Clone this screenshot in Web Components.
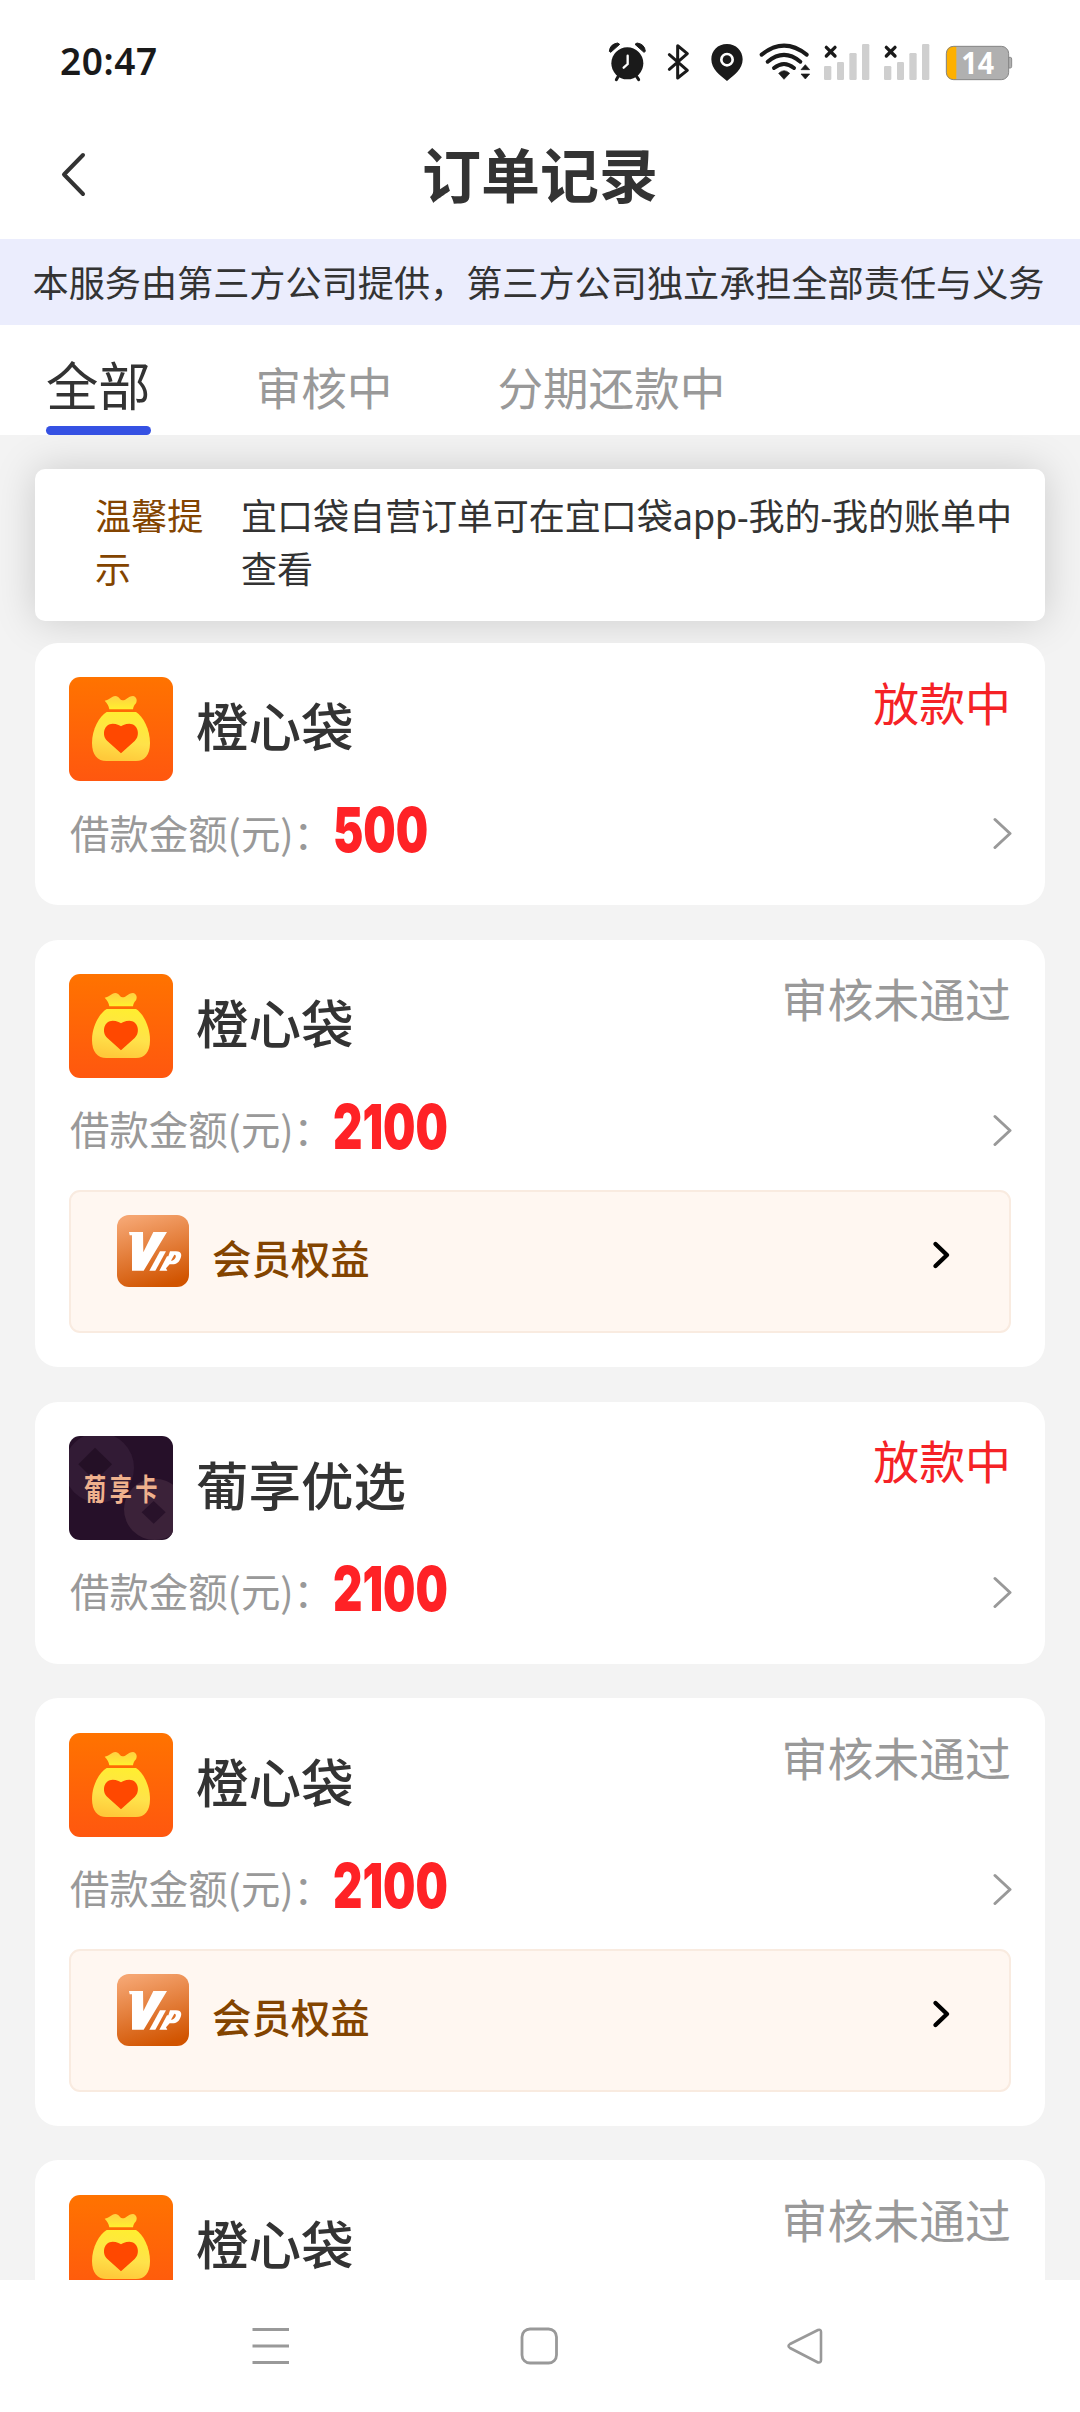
<!DOCTYPE html>
<html lang="zh-CN">
<head>
<meta charset="utf-8">
<title>订单记录</title>
<style>
html,body{margin:0;padding:0}
body{background:#f3f3f3;font-family:"Noto Sans CJK SC",sans-serif;color:#333}
</style>
</head>
<body>
<order-page></order-page>
<script>
const define = (name, html) => customElements.define(name, class extends HTMLElement {
  connectedCallback() {
    if (this.shadowRoot) return;
    const t = document.createElement('template');
    t.innerHTML = typeof html === 'function' ? html(this) : html;
    this.attachShadow({ mode: 'open' }).appendChild(t.content.cloneNode(true));
  }
});

define('status-bar', `
<style>
:host{display:flex;justify-content:space-between;height:110px;background:#fff;box-sizing:border-box;padding:0 40px 0 60px}
.time{font:600 37px/50px "Noto Sans",sans-serif;letter-spacing:.6px;color:#1a1a1a;margin-top:36px}
svg{display:block;margin-top:20px}
</style>
<div class="time">20:47</div>
<svg width="460" height="90" viewBox="0 0 1380 270" fill="#1a1a1a">
  <circle cx="142" cy="130" r="48"/>
  <path d="M88 94 Q90 72 113 69 L119 73 L92 97Z M196 94 Q194 72 171 69 L165 73 L192 97Z" stroke="#1a1a1a" stroke-width="3" stroke-linejoin="round"/>
  <path d="M117 165 L109 179 M167 165 L176 179" stroke="#1a1a1a" stroke-width="9" stroke-linecap="round"/>
  <path d="M143 107 V132 L131 143" stroke="#fff" stroke-width="7" fill="none" stroke-linecap="round"/>
  <path d="M268 104 L322 151 L293 174 V77 L322 101 L268 148" fill="none" stroke="#1a1a1a" stroke-width="9" stroke-linecap="round" stroke-linejoin="round"/>
  <path fill-rule="evenodd" d="M441 72 C413 72 394 92 394 118 C394 148 420 166 441 183 C462 166 488 148 488 118 C488 92 468 72 441 72Z M441 98a21 21 0 1 1 0 42a21 21 0 1 1 0-42Z"/>
  <circle cx="441" cy="119" r="13"/>
  <g fill="none" stroke="#1a1a1a" stroke-width="12" stroke-linecap="round">
    <path d="M545 104 Q612 50 680 104"/><path d="M563 125 Q612 84 661 125"/><path d="M582 144 Q612 120 642 144"/>
  </g>
  <path d="M596 160 Q612 144 629 160 L612 178Z M663 149 L676 134 L689 149Z M663 162 L676 177 L689 162Z" stroke="#1a1a1a" stroke-width="2" stroke-linejoin="round"/>
  <g id="s"><g fill="#cfcfcf"><rect x="732" y="138" width="22" height="42" rx="4"/><rect x="771" y="126" width="21" height="54" rx="4"/><rect x="808" y="99" width="22" height="81" rx="4"/><rect x="846" y="72" width="22" height="108" rx="4"/></g>
  <path d="M739 82 L765 108 M765 82 L739 108" stroke="#1a1a1a" stroke-width="10" stroke-linecap="round"/></g>
  <use href="#s" x="180"/>
  <path d="M1285 112 h6 q4 0 4 5 v22 q0 5 -4 5 h-6z" fill="#b0b0b0" stroke="#8a8a8a" stroke-width="3"/>
  <rect x="1099" y="79" width="187" height="100" rx="22" fill="#b0b0b0"/>
  <path d="M1129 79 h-8 q-22 0 -22 22 v56 q0 22 22 22 h8z" fill="#fdb000"/>
  <rect x="1099" y="79" width="187" height="100" rx="22" fill="none" stroke="#858585" stroke-width="3"/>
  <text x="1144" y="163" font-family="Noto Sans" font-weight="700" font-size="92" textLength="98" lengthAdjust="spacingAndGlyphs" fill="#fff">14</text>
</svg>`);

define('page-header', `
<style>
:host{display:grid;grid-template-columns:120px 1fr 120px;align-items:center;height:129px;background:#fff}
svg{margin-left:58px;display:block}
h1{margin:-4px 0 0;text-align:center;font-size:59px;line-height:80px;font-weight:700;color:#333}
</style>
<svg width="32" height="48" viewBox="0 0 32 48" fill="none" stroke="#333" stroke-width="4" stroke-linecap="round" stroke-linejoin="round"><path d="M25 4 L6 23.500 L25 43"/></svg>
<h1><slot></slot></h1>`);

define('service-notice', `
<style>:host{display:flex;align-items:center;justify-content:center;box-sizing:border-box;height:86px;padding:0 3px 3px 0;background:#ebedfd;color:#333;font-size:36.15px;line-height:50px;white-space:nowrap}</style>
<slot></slot>`);

define('tab-bar', `
<style>:host{display:flex;gap:105px;height:110px;padding-left:46px;background:#fff;position:relative;z-index:1}</style>
<slot></slot>`);

define('tab-item', `
<style>
:host{display:flex;flex-direction:column;justify-content:flex-end;font-size:45.6px;color:#999;height:110px;white-space:nowrap}
span{line-height:64px;padding-bottom:8px}
i{display:block;height:9px;border-radius:5px}
:host([active]){color:#333;font-size:52.3px}
:host([active]) span{padding-bottom:11px}
:host([active]) i{background:#3551e3}
</style>
<span><slot></slot></span><i></i>`);

define('tip-card', `
<style>
:host{display:flex;box-sizing:border-box;height:152px;padding:21px 10px 0 60px;background:#fff;border-radius:10px;box-shadow:0 0 42px rgba(0,0,0,.17);font-family:"Noto Sans","Noto Sans CJK SC",sans-serif;font-size:36.1px;line-height:53px}
.k{width:120px;color:#834400;margin-right:26px;flex:none}
.v{flex:1;color:#333;letter-spacing:-.1px}
</style>
<div class="k"><slot name="title"></slot></div><div class="v"><slot></slot></div>`);

define('app-logo', el => `
<style>:host{display:block;width:104px;height:104px;border-radius:11px;overflow:hidden;flex:none}svg{display:block}</style>` +
(el.getAttribute('kind') === 'card' ? `
<svg width="104" height="104" viewBox="0 0 312 312"><rect width="312" height="312" fill="#261029"/>
<circle cx="90" cy="95" r="105" fill="#321b35"/><path d="M78 35 L129 85 L78 135 L28 85Z" fill="#241026"/>
<circle cx="257" cy="220" r="92" fill="#3b2239"/><path d="M254 195 L290 229 L254 263 L218 229Z" fill="#28122a"/>
<text transform="translate(45 191) scale(.74 1)" font-family="Noto Sans CJK SC" font-weight="700" font-size="90" letter-spacing="14" fill="#efb18d">葡享卡</text></svg>` : `
<svg width="104" height="104" viewBox="0 0 312 312"><defs><linearGradient id="o" x2="0" y2="1"><stop stop-color="#ff7300"/><stop offset="1" stop-color="#ff570f"/></linearGradient><linearGradient id="y" x1=".7" x2=".5" y2="1"><stop stop-color="#ffee30"/><stop offset=".6" stop-color="#ffe24a"/><stop offset="1" stop-color="#ffc93a"/></linearGradient><linearGradient id="t" x2="0" y2="1"><stop stop-color="#ffcf42"/><stop offset="1" stop-color="#fff02f"/></linearGradient></defs>
<rect width="312" height="312" fill="url(#o)"/>
<path fill="url(#t)" d="M107 71 C121 70 127 57 139 57 C151 57 151 69 160 70 C172 71 176 57 192 57 C202 59 206 69 201 79 C196 84 193 90 192 97 H121 C119 85 115 80 107 71Z"/>
<path fill="url(#y)" d="M113 105 H201 C222 118 243 157 243 198 C243 234 227 252 201 252 H112 C86 252 69 234 69 198 C69 157 91 118 113 105Z"/>
<path fill="#ff4800" d="M156 229 L115 192 C96 173 106 140 131 140 C144 140 151 145 156 148 C161 145 168 140 181 140 C206 140 216 173 197 192Z"/></svg>`));

define('chevron-right', `
<style>:host{display:block;flex:none;margin-right:-1px}svg{display:block}</style>
<svg width="20" height="32" viewBox="0 0 20 32" fill="none" stroke="currentColor" stroke-width="3" stroke-linecap="round" stroke-linejoin="round"><path d="M3 2.500 L18 16.500 L3 30.500"/></svg>`);

define('vip-entry', `
<style>
:host{display:flex;box-sizing:border-box;height:143px;padding:23px 58px 0 46px;background:#fff7f1;border:2px solid #f9ebe0;border-radius:11px;margin-top:30px}
svg{display:block}
span{font-size:39.4px;font-weight:500;line-height:56px;color:#834400;margin:14px 0 0 23px;flex:1}
.a{margin-top:25px}
</style>
<svg width="72" height="72" viewBox="0 0 216 216"><defs><linearGradient id="v" x1=".3" y1="0" x2=".6" y2="1"><stop stop-color="#f5a571"/><stop offset="1" stop-color="#d15400"/></linearGradient></defs>
<rect width="216" height="216" rx="36" fill="url(#v)"/>
<path fill="#fff" d="M36 51 H78 L79 112 L109 51 H150 L80 167 H45 V61 H38Z"/>
<path fill="#fff" d="M129 109 H147 L115 167 H97Z"/>
<path fill="#fff" fill-rule="evenodd" d="M159 109 H177 C196 109 196 124 187 137 C180 148 170 148 158 148 L147 160 L151 167 H127 L150 124 H154Z M172 119 L162 137 C174 138 182 119 172 119Z"/></svg>
<span><slot></slot></span>
<svg class="a" width="20" height="30" viewBox="0 0 20 30" fill="none" stroke="#000" stroke-width="4.4" stroke-linecap="round" stroke-linejoin="round"><path d="M4.500 4 L16 15 L4.500 26"/></svg>`);

define('order-card', el => `
<style>
:host{display:block;box-sizing:border-box;padding:34.3px 34px 34px;background:#fff;border-radius:23px;position:relative;min-height:262px}
.top{display:flex;height:104px}
.name{flex:1;font-size:52.5px;font-weight:500;line-height:72px;margin:11px 0 0 23px;color:#333}
.st{font-size:45.9px;line-height:60px;margin-top:-6.5px;color:#999}
.st.hot{color:#f52226}
.row{display:flex;align-items:center;height:60px;margin-top:22px;color:#999}
.label{width:264px;font-size:39.4px;line-height:56px;white-space:nowrap;padding-left:1px;margin-top:-3px;box-sizing:border-box}
.amt{flex:1}
.amt b{display:inline-block;transform:scaleX(.735);transform-origin:0 50%;font:900 62px/60px Inter,sans-serif;color:#ff2226;margin-top:-6px}
</style>
<div class="top"><app-logo kind="${el.getAttribute('logo') || 'bag'}"></app-logo><div class="name">${el.getAttribute('name')}</div><div class="st ${el.hasAttribute('lending') ? 'hot' : ''}">${el.hasAttribute('lending') ? '放款中' : '审核未通过'}</div></div>
${el.hasAttribute('amount') ? `<div class="row"><div class="label">借款金额(元)：</div><div class="amt"><b>${el.getAttribute('amount')}</b></div><chevron-right></chevron-right></div>` : ''}
<slot></slot>`);

define('nav-bar', `
<style>:host{display:flex;height:132px;background:#fff;padding:47px 0 0 251px;box-sizing:border-box;gap:229px;flex:none}svg{display:block;flex:none}svg:last-child{margin-left:-2px}</style>
<svg width="40" height="38" stroke="#999" stroke-width="3"><path d="M1.500 2.500H38M1.500 19H38M1.500 35.500H38"/></svg>
<svg width="40" height="38" fill="none" stroke="#999" stroke-width="2.8"><rect x="2" y="2" width="34.5" height="34" rx="8"/></svg>
<svg width="40" height="38" fill="none" stroke="#999" stroke-width="2.6" stroke-linejoin="round"><path d="M30 3 L2 17 Q-1 19 2 21 L30 35.500 Q33 36 33 33 V5 Q33 2 30 3Z" transform="translate(1 0)"/></svg>`);

define('order-page', `
<style>
:host{display:flex;flex-direction:column;width:1080px;height:2412px;overflow:hidden;background:#f3f3f3}
main{flex:1;min-height:0;overflow:hidden;padding:34px 35px 0;display:flex;flex-direction:column}
main>*{flex:none}
.list{display:flex;flex-direction:column;gap:34.7px;margin-top:22px}
</style>
<status-bar></status-bar>
<page-header>订单记录</page-header>
<service-notice>本服务由第三方公司提供，第三方公司独立承担全部责任与义务</service-notice>
<tab-bar><tab-item active>全部</tab-item><tab-item>审核中</tab-item><tab-item>分期还款中</tab-item></tab-bar>
<main>
<tip-card><span slot="title">温馨提示</span>宜口袋自营订单可在宜口袋app-我的-我的账单中查看</tip-card>
<div class="list">
<order-card name="橙心袋" amount="500" lending></order-card>
<order-card name="橙心袋" amount="2100"><vip-entry>会员权益</vip-entry></order-card>
<order-card name="葡享优选" amount="2100" logo="card" lending></order-card>
<order-card name="橙心袋" amount="2100"><vip-entry>会员权益</vip-entry></order-card>
<order-card name="橙心袋"></order-card>
</div>
</main>
<nav-bar></nav-bar>`);
</script>
</body>
</html>
